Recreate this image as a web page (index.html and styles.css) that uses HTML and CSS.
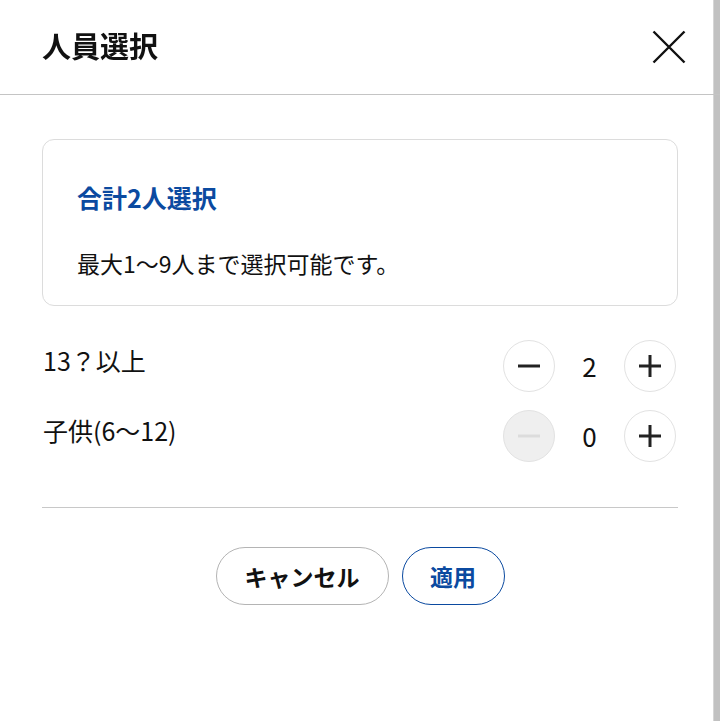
FILE: index.html
```html
<!DOCTYPE html>
<html lang="ja">
<head>
<meta charset="utf-8">
<link rel="stylesheet" href="styles.css">
</head>
<body>
<div class="dialog">
  <header class="header">
    <h1 class="title">人員選択</h1>
    <button class="close" aria-label="閉じる">
      <svg width="34" height="34" viewBox="0 0 34 34"><path d="M1.5 1.5 L32.5 32.5 M32.5 1.5 L1.5 32.5" stroke="#111" stroke-width="2.4" fill="none"/></svg>
    </button>
  </header>
  <main class="content">
    <section class="card">
      <p class="card-title">合計2人選択</p>
      <p class="card-text">最大1〜9人まで選択可能です。</p>
    </section>
    <div class="rows">
      <div class="row">
        <span class="label">13？以上</span>
        <div class="counter">
          <button class="step"><svg width="24" height="24" viewBox="0 0 24 24"><path d="M1 12 H23" stroke="#222" stroke-width="3"/></svg></button>
          <span class="value">2</span>
          <button class="step"><svg width="24" height="24" viewBox="0 0 24 24"><path d="M1 12 H23 M12 1 V23" stroke="#222" stroke-width="3"/></svg></button>
        </div>
      </div>
      <div class="row">
        <span class="label">子供(6〜12)</span>
        <div class="counter">
          <button class="step disabled"><svg width="24" height="24" viewBox="0 0 24 24"><path d="M1 12 H23" stroke="#dcdcdc" stroke-width="3"/></svg></button>
          <span class="value">0</span>
          <button class="step"><svg width="24" height="24" viewBox="0 0 24 24"><path d="M1 12 H23 M12 1 V23" stroke="#222" stroke-width="3"/></svg></button>
        </div>
      </div>
    </div>
    <div class="actions">
      <button class="btn cancel">キャンセル</button>
      <button class="btn apply">適用</button>
    </div>
  </main>
</div>
<div class="scrollbar"></div>
</body>
</html>
```
FILE: styles.css
```css
* { box-sizing: border-box; }
html, body { margin: 0; padding: 0; background: #fff; }
body {
  font-family: "Noto Sans CJK JP", "Noto Sans", sans-serif;
  color: #111;
  width: 720px;
  height: 721px;
  overflow: hidden;
}
.header {
  height: 95px;
  border-bottom: 1px solid #c4c4c4;
  display: flex;
  align-items: center;
  justify-content: space-between;
  padding: 0 34px 4px 42px;
  position: relative;
  z-index: 2;
}
.title {
  margin: 0;
  font-size: 29px;
  font-weight: 700;
  line-height: 1;
}
.close {
  border: 0;
  background: none;
  padding: 0;
  width: 34px;
  height: 34px;
  display: block;
  margin-top: 4px;
}
.close svg { display: block; }
.content { padding: 44px 42px 0; }
.card {
  border: 1px solid #dcdcdc;
  border-radius: 12px;
  height: 167px;
  padding: 40px 34px 0;
}
.card p { margin: 0; }
.card-title {
  color: #0b4aa0;
  font-size: 25px;
  font-weight: 700;
  line-height: 34px;
}
.card-text {
  margin-top: 34px !important;
  font-size: 23px;
  line-height: 30px;
}
.rows {
  padding: 34px 0 45px;
  border-bottom: 1px solid #c8c8c8;
  display: flex;
  flex-direction: column;
  gap: 18px;
}
.row {
  display: flex;
  align-items: center;
  justify-content: space-between;
}
.label {
  font-size: 25px;
  line-height: 30px;
  padding-left: 1px;
  padding-bottom: 12px;
}
.counter {
  display: flex;
  align-items: center;
  margin-right: 2px;
}
.step {
  width: 52px;
  height: 52px;
  border-radius: 50%;
  border: 1px solid #e2e2e2;
  background: #fff;
  padding: 0;
  display: flex;
  align-items: center;
  justify-content: center;
}
.step svg { display: block; }
.step.disabled { background: #efefef; }
.value {
  width: 69px;
  text-align: center;
  font-size: 26px;
  line-height: 1;
}
.actions {
  display: flex;
  justify-content: center;
  gap: 13px;
  padding-top: 39px;
}
.btn {
  height: 58px;
  border-radius: 29px;
  background: #fff;
  font-family: "Noto Sans CJK JP", "Noto Sans", sans-serif;
  font-size: 23px;
  font-weight: 700;
  padding: 0;
}
.cancel {
  width: 173px;
  border: 1px solid #b4b4b4;
  color: #111;
}
.apply {
  width: 103px;
  border: 1.5px solid #0b4aa0;
  color: #0b4aa0;
}
.scrollbar {
  position: fixed;
  top: 0;
  right: 0;
  width: 7px;
  height: 721px;
  background: #c1c1c1;
  border-left: 1px solid #d6d6d6;
  z-index: 1;
}
```
